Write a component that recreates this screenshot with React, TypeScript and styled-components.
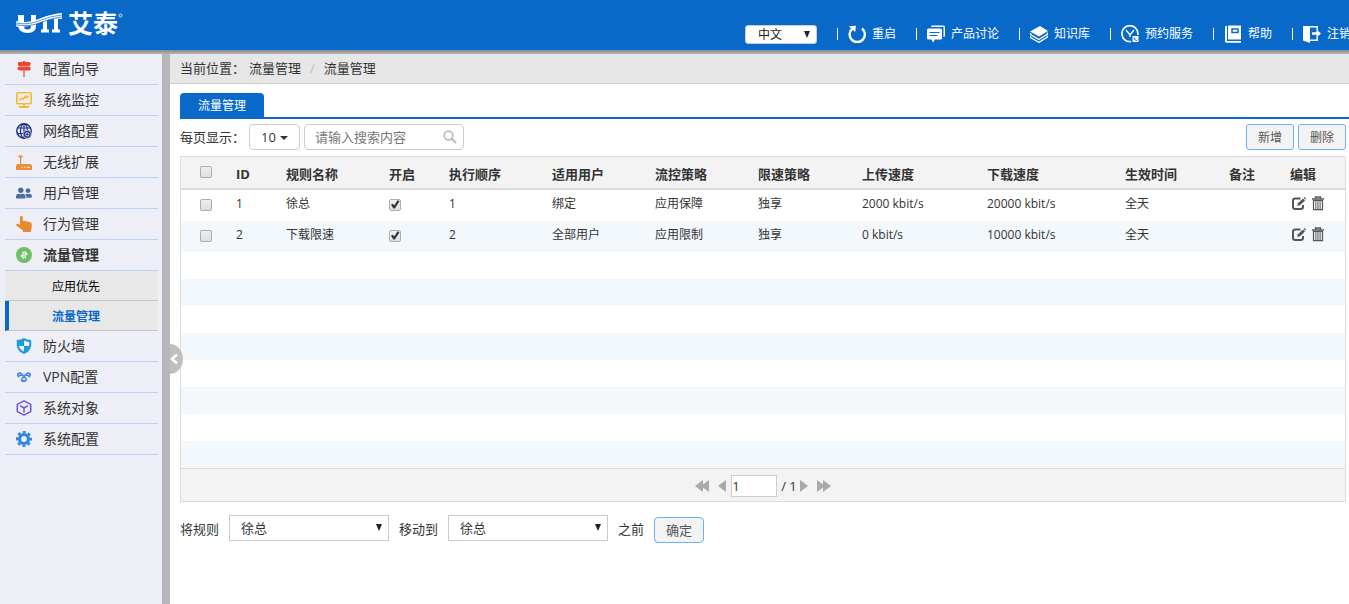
import React from "react";
import styled, { createGlobalStyle, css } from "styled-components";
import { FaUserFriends } from "react-icons/fa";

const GlobalStyle = createGlobalStyle`
  * { box-sizing: border-box; }
  body {
    margin: 0;
    background: #fff;
    color: #333;
    font-family: "Open Sans", "Noto Sans CJK SC", sans-serif;
    font-size: 13px;
    line-height: 20px;
  }
  button, input, select { font-family: inherit; }
  a { text-decoration: none; }
`;

const Page = styled.div`
  min-height: 100vh;
  display: flex;
  flex-direction: column;
  overflow: hidden;
`;

/* ---------- header ---------- */

const Header = styled.header`
  display: flex;
  align-items: flex-start;
  height: 50px;
  padding-left: 15px;
  background: #0869c9;
  overflow: hidden;
`;

const HeaderShade = styled.div`
  height: 4px;
  background: linear-gradient(#88898e, #b2b4ba);
`;

const Brand = styled.a`
  display: flex;
  align-items: flex-start;
  gap: 5px;
  margin-top: 11px;
  color: #fff;
  font-size: 25px;
  line-height: 24px;
  font-weight: 700;
`;

const BrandMark = styled.svg`
  width: 48px;
  height: 24px;
`;

const Registered = styled.svg`
  width: 5px;
  height: 5px;
  margin: 2px 0 0 -5px;
`;

const HeaderTools = styled.nav`
  display: flex;
  align-items: center;
  margin: 24px -2px 0 auto;
  flex: none;
`;

const SelectBox = styled.span`
  position: relative;
  display: inline-flex;
`;

const SelectArrow = styled.svg<{ $right: number; $top: number }>`
  position: absolute;
  right: ${(p) => p.$right}px;
  top: ${(p) => p.$top}px;
  width: 6px;
  height: 7px;
  fill: #222;
  pointer-events: none;
`;

const LangSelect = styled.select`
  appearance: none;
  width: 72px;
  height: 19px;
  padding: 0 0 0 12px;
  border: 1px solid #ccc;
  border-radius: 3px;
  background: #fff;
  color: #222;
  font-size: 12px;
  line-height: 17px;
`;

const ToolList = styled.div`
  display: flex;
  gap: 20px;
  margin-left: 20px;
`;

const Tool = styled.a`
  display: flex;
  align-items: center;
  gap: 6px;
  color: #fff;
  font-size: 12px;
  line-height: 20px;
  white-space: nowrap;

  &::before {
    content: "";
    width: 1px;
    height: 12px;
    margin-right: 4px;
    background: #fff;
  }

  svg {
    width: 18px;
    height: 18px;
  }
`;

/* ---------- sidebar ---------- */

const Body = styled.div`
  flex: 1;
  display: flex;
`;

const Sidebar = styled.aside`
  position: relative;
  flex: none;
  width: 170px;
  padding: 0 4px 0 5px;
  border-right: 8px solid #b5b7bd;
  background: #eeeff6;
`;

const MenuItem = styled.a<{ $active?: boolean }>`
  display: flex;
  align-items: center;
  gap: 11px;
  height: 31px;
  padding-left: 11px;
  border-bottom: 1px solid #bbd2f4;
  color: #333;
  font-size: 14px;
  font-weight: ${(p) => (p.$active ? 700 : 400)};

  svg {
    flex: none;
    width: 16px;
    height: 16px;
  }
`;

const SubItem = styled.a<{ $active?: boolean }>`
  display: flex;
  align-items: center;
  height: 30px;
  padding: 2px 0 0 47px;
  border-bottom: 1px solid #c6c6c8;
  background: #e8e8e8;
  color: #000;
  font-size: 12px;
  ${(p) =>
    p.$active &&
    css`
      padding-left: 43px;
      border-left: 4px solid #0869c9;
      color: #0869c9;
      font-weight: 700;
    `}
`;

const Collapse = styled.button`
  position: absolute;
  left: 170px;
  top: 290px;
  width: 13px;
  height: 30px;
  padding: 0;
  border: 0;
  border-radius: 0 13px 13px 0 / 0 15px 15px 0;
  background: #bfbfbf;
  cursor: pointer;

  svg {
    display: block;
    width: 9px;
    height: 12px;
  }
`;

/* ---------- content ---------- */

const Main = styled.main`
  flex: 1;
  min-width: 0;
`;

const Breadcrumb = styled.div`
  display: flex;
  align-items: center;
  height: 30px;
  padding: 0 0 2px 10px;
  border-bottom: 1px solid #ccc;
  background: #e7e7e7;
`;

const CrumbLabel = styled.span`
  margin-right: 4px;
`;

const Crumb = styled.a`
  color: #333;
`;

const CrumbSlash = styled.span`
  padding: 0 9px;
  color: #bbb;
`;

const Tabs = styled.div`
  display: flex;
  margin: 9px 0 0 10px;
  border-bottom: 2px solid #0869c9;
`;

const Tab = styled.button`
  height: 24px;
  padding: 0 18px;
  border: 0;
  border-radius: 4px 4px 0 0;
  background: #0869c9;
  color: #fff;
  font-size: 12px;
`;

const Panel = styled.section`
  padding: 5px 3px 0 10px;
`;

const Toolbar = styled.div`
  display: flex;
  align-items: center;
  gap: 4px;
  height: 26px;
`;

const SizeButton = styled.button`
  display: flex;
  align-items: center;
  justify-content: center;
  gap: 4px;
  width: 51px;
  height: 26px;
  padding: 0;
  border: 1px solid #ccc;
  border-radius: 4px;
  background: #fff;
  color: #333;
  font-size: 13px;
`;

const Caret = styled.i`
  margin-top: 2px;
  border: 4px solid transparent;
  border-top-color: #333;
  border-bottom: 0;
`;

const SearchBox = styled.label`
  display: flex;
  align-items: center;
  width: 160px;
  height: 26px;
  padding: 0 6px 0 10px;
  border: 1px solid #ccc;
  border-radius: 4px;

  svg {
    flex: none;
    width: 14px;
    height: 14px;
  }
`;

const SearchInput = styled.input`
  flex: 1;
  min-width: 0;
  height: 20px;
  padding: 0;
  border: 0;
  outline: 0;
  background: none;
  font-size: 13px;

  &::placeholder { color: #777; }
`;

const Actions = styled.div`
  display: flex;
  gap: 4px;
  margin-left: auto;
`;

const ActionButton = styled.button<{ $large?: boolean }>`
  width: ${(p) => (p.$large ? 50 : 48)}px;
  height: 26px;
  padding: 0;
  border: 1px solid #6db1f8;
  border-radius: ${(p) => (p.$large ? 4 : 3)}px;
  background: #f3f3f3;
  color: #555;
  font-size: ${(p) => (p.$large ? 13 : 12)}px;
`;

const TableFrame = styled.div`
  margin-top: 6px;
  border: 1px solid #dcdcdc;
`;

const RuleTable = styled.table`
  width: 100%;
  table-layout: fixed;
  border-collapse: separate;
  border-spacing: 0;
`;

const Th = styled.th`
  height: 33px;
  padding: 2px 0 0 8px;
  border-bottom: 2px solid #dcdcdc;
  background: #f3f3f3;
  font-size: 13px;
  font-weight: 700;
  text-align: left;
  white-space: nowrap;
`;

const CheckTh = styled(Th)`
  padding: 0 0 2px 8px;
`;

const Row = styled.tr`
  &:nth-child(even) { background: #f3f8fc; }
`;

const Td = styled.td`
  height: 31px;
  padding: 0 0 3px 8px;
  font-size: 12px;
  white-space: nowrap;
`;

const IconTd = styled(Td)`
  padding-bottom: 5px;
`;

const EmptyTd = styled.td`
  height: 27px;
  padding: 0;
`;

const CheckCell = styled.div`
  display: flex;
  padding-left: 11px;
`;

const RowCheck = styled.div<{ $inset?: boolean }>`
  display: flex;
  padding: 1px 0 0 ${(p) => (p.$inset ? 11 : 0)}px;
`;

const Checkbox = styled.input.attrs({ type: "checkbox" })`
  appearance: none;
  display: block;
  width: 12px;
  height: 12px;
  margin: 0;
  border: 1px solid #adadad;
  border-radius: 2px;
  background: linear-gradient(#efefef, #dedede);

  &:checked::before {
    content: "";
    display: block;
    width: 10px;
    height: 10px;
    background: #333;
    clip-path: polygon(10% 50%, 28% 42%, 42% 60%, 76% 8%, 95% 18%, 48% 90%, 34% 90%);
  }
`;

const RowTools = styled.div`
  display: flex;
  gap: 5px;
  padding-left: 2px;
`;

const IconButton = styled.button`
  display: block;
  padding: 0;
  border: 0;
  background: none;
  line-height: 0;
  cursor: pointer;

  svg {
    width: 14px;
    height: 15px;
  }
`;

const Pager = styled.div`
  display: flex;
  align-items: center;
  justify-content: center;
  height: 33px;
  padding-top: 2px;
  border-top: 1px solid #dcdcdc;
  background: #f3f3f3;
`;

const PagerButton = styled.button<{ $wide?: boolean }>`
  width: ${(p) => (p.$wide ? 14 : 10)}px;
  height: 12px;
  padding: 0;
  border: 0;
  background: none;

  svg {
    display: block;
    width: 100%;
    height: 12px;
    fill: #aaa;
  }
`;

const PagerGroup = styled.div`
  display: flex;
  align-items: center;
  gap: 8px;
`;

const PageInput = styled.input`
  width: 46px;
  height: 22px;
  margin: 0 4px;
  padding: 1px 0;
  border: 1px solid #ccc;
  background: #fff;
  color: #333;
  font-size: 13px;
`;

const PageTotal = styled.span`
  padding-right: 2px;
  font-size: 13px;
`;

const MoveForm = styled.form`
  display: flex;
  align-items: flex-start;
  gap: 10px;
  margin-top: 13px;
  line-height: 28px;

  ${ActionButton} {
    margin-top: 2px;
    padding-bottom: 2px;
  }
`;

const RuleSelect = styled.select`
  appearance: none;
  width: 160px;
  height: 26px;
  padding: 0 11px;
  border: 1px solid #ccc;
  border-radius: 0;
  background: #fff;
  color: #333;
  font-size: 13px;
`;

/* ---------- icons ---------- */

const LogoIcon = () => (
  <BrandMark viewBox="0 0 48 24" aria-hidden="true">
    <g fill="#fff">
      <path d="M3 4h6v11q0 3.500 3.500 3.500T16 15V4h5v11q0 7-8.500 7T3 15z" />
      <path d="M28 9h4v9.500h2v3h-8v-3h2zM39 8h4v10.500h2v3h-8v-3h2z" />
      <path d="M1 10Q12 13 25 7.500 35 3 47 2v6q-12-1-22 3.500-13 5.500-24 4z" />
    </g>
    <g fill="none" stroke="#0869c9" strokeWidth="0.7">
      <path d="M1 12q12 2.500 24-2.500Q35 5 47 4M1 13.800q13 2.500 25-2.300Q36 7 47 6" />
    </g>
  </BrandMark>
);

const RestartIcon = () => (
  <svg viewBox="0 0 18 18" fill="none" stroke="#fff" strokeWidth="2.400">
    <path d="M14 3.500A7.600 7.600 0 1 1 4.500 3.500" />
    <path d="M.8 1.200 8 .8 7.200 7z" fill="#fff" stroke="none" />
  </svg>
);

const ForumIcon = () => (
  <svg viewBox="0 0 18 18">
    <path d="M4 2q0-1.500 1.500-1.500h11Q18 .5 18 2v8.500q0 1.500-1.500 1.500V2z" fill="#fff" />
    <path d="M1.500 3.500h12Q15 3.500 15 5v8q0 1.500-1.500 1.500H8L6 17.500l-1.500-3h-3Q0 14.500 0 13V5q0-1.500 1.500-1.500z" fill="#fff" />
    <path d="M2.500 7.500h10M2.500 10.500h8" stroke="#0869c9" strokeWidth="1.200" />
  </svg>
);

const BooksIcon = () => (
  <svg viewBox="0 0 18 18">
    <path d="M10 1 18 6 9 11.500 0 6.500z" fill="#fff" />
    <path d="M.5 8v1.500L9 14.500 17.500 9V7.500M.5 11v1.500l8.500 4.800 8.500-5.300v-1.500" fill="none" stroke="#fff" strokeWidth="1.300" />
  </svg>
);

const BookingIcon = () => (
  <svg viewBox="0 0 18 18" fill="none" stroke="#fff">
    <path d="M10 16.600A8 8 0 1 1 16.800 10" strokeWidth="1.700" />
    <path d="M5 5l4 5 4-5M9 10v2" strokeWidth="1.300" />
    <path d="M11.500 11h6v6h-6z" fill="#fff" stroke="none" />
    <path d="M13 12.500q0 3 3 3" stroke="#0869c9" />
  </svg>
);

const HelpIcon = () => (
  <svg viewBox="0 0 18 18">
    <path d="M1 1h2v15h14v1.800H2.500Q1 17.800 1 16.500zM4 .5h13v14H4z" fill="#fff" />
    <path d="M8 4h6v3.500H8z" fill="none" stroke="#0869c9" strokeWidth="1.500" />
  </svg>
);

const LogoutIcon = () => (
  <svg viewBox="0 0 18 18">
    <path d="M0 1h15v4h-1.500V2.500H7v12h6.500V12H15v4H7v2L0 15.500z" fill="#fff" />
    <path d="M9 7.300h4.500V4.500L18 8.500l-4.500 4V9.700H9z" fill="#fff" />
  </svg>
);

const SignpostIcon = () => (
  <svg viewBox="0 0 16 16" fill="#e6492d">
    <path d="M7 0h2v1h4.500L15 2.800 13.500 5H3Q2 5 2 4V2q0-1 1-1h4zM3 5.500h10.500q1 0 1 1v2q0 1-1 1H3L1 7.500z" />
    <path d="M7 9.500h2V16H7z" opacity=".6" />
  </svg>
);

const MonitorIcon = () => (
  <svg viewBox="0 0 16 16" fill="none" stroke="#f2bd2c">
    <rect x=".8" y=".8" width="14.400" height="11" rx="1" strokeWidth="1.600" />
    <path d="M3 8.500l2.500-2 1.500 1 2.500-3.500 1 2 2.500-2.500" strokeWidth="1.500" />
    <path d="M8 12v2.500M3 15h10" strokeWidth="1.800" />
  </svg>
);

const GlobeIcon = () => (
  <svg viewBox="0 0 16 16" fill="none" stroke="#1f2f86">
    <circle cx="8" cy="8" r="7.200" strokeWidth="1.500" />
    <ellipse cx="8" cy="8" rx="3.500" ry="7.200" strokeWidth="1.200" />
    <path d="M1 5h14M1 10.500h14M8 1v14" strokeWidth="1.200" />
    <circle cx="11.300" cy="11.300" r="4" fill="#1f2f86" stroke="#eeeff6" strokeWidth=".6" />
    <circle cx="11.300" cy="11.300" r="1.700" stroke="#eeeff6" />
  </svg>
);

const RouterIcon = () => (
  <svg viewBox="0 0 16 16">
    <path d="M1.500 2.500Q4.500-.8 7.500 2.500L4.500 5z" fill="#e98e33" opacity=".7" />
    <path d="M4 3h1.200v7H4z" fill="#e98e33" />
    <path d="M1.500 10h13l1.500 1.500V15q0 1-1 1H1q-1 0-1-1v-3.500z" fill="#e98e33" />
    <path d="M5.500 13.200h1.200M8.200 13.200h1.200M11 13.200h3" stroke="#fff" />
  </svg>
);

const HandIcon = () => (
  <svg viewBox="0 0 16 16" fill="#e58a2e">
    <path d="M4 1.300Q4 0 5.400 0t1.400 1.300V5q1.500-.4 2.300.3 1.300-.5 2.200.4 1.400-.4 2.200.5Q15.700 6 15.700 8v3q0 1.500-.7 2.500V16H7v-1.500L.6 9.700Q-.2 8.800.7 8q.9-.6 2 0L4 8.700z" />
  </svg>
);

const FlowIcon = () => (
  <svg viewBox="0 0 16 16">
    <circle cx="8" cy="8" r="8" fill="#6dc067" />
    <path d="M7 4.500v6.300L4.800 8.300M9.200 11.500V5.200l2.200 2.500" fill="none" stroke="#fff" strokeWidth="1.300" />
  </svg>
);

const ShieldIcon = () => (
  <svg viewBox="0 0 16 16">
    <path d="M8 0q3 2 7.200 2v5.500Q14.500 13.500 8 16 1.500 13.500.8 7.500V2Q5 2 8 0z" fill="#1b9ade" />
    <path d="M8 2.500q2.500 1.300 5.200 1.500V8H8zM2.800 8H8v5.500Q3.800 11.800 2.800 8z" fill="#eeeff6" />
  </svg>
);

const VpnIcon = () => (
  <svg viewBox="0 0 16 16" fill="none" stroke="#3b82e0" strokeWidth="1.500" strokeLinecap="round" strokeLinejoin="round">
    <path d="M3 7.800A2 2 0 1 1 5.200 4.600L9.800 9.500a1.600 1.600 0 1 1-2.600 1.800" />
    <path d="M3.500 6.200h1.800M12.500 6.200h-1.800" />
    <path d="M13 7.800a2 2 0 1 0-2.200-3.200L6 9.500a1.500 1.500 0 1 0 2 2.300" />
  </svg>
);

const CubeIcon = () => (
  <svg viewBox="0 0 16 16" fill="none" stroke="#6f55d0" strokeWidth="1.500" strokeLinejoin="round">
    <path d="M8 .8 14.700 4.300v7.400L8 15.200 1.300 11.700V4.300z" />
    <path d="M4 5.700 8 8l4-2.300M8 8v4.800" />
  </svg>
);

const GearIcon = () => (
  <svg viewBox="0 0 16 16" fill="none" stroke="#2f86dc">
    <circle cx="8" cy="8" r="4.500" strokeWidth="3.200" />
    <circle cx="8" cy="8" r="6.900" strokeWidth="2.200" strokeDasharray="3.100 2.319" strokeDashoffset="1.550" />
  </svg>
);

const SearchIcon = () => (
  <svg viewBox="0 0 14 14" fill="none" stroke="#bbb">
    <circle cx="5.500" cy="5.500" r="4.300" strokeWidth="1.800" />
    <path d="M8.800 8.800 13 13" strokeWidth="2.200" />
  </svg>
);

const EditIcon = () => (
  <svg viewBox="0 0 14 15" fill="none" stroke="#555">
    <path d="M8.500 2.500H3.300Q1 2.500 1 4.800v6Q1 13 3.300 13h5.400Q11 13 11 10.800V9" strokeWidth="2" />
    <path d="M5.300 10l.6-2.700L11 2.500l2 2L8 9.300z" fill="#555" stroke="none" />
    <path d="M11.600 1.800l.8-.8 1.600 1.600-.6 1.200z" fill="#555" stroke="none" />
  </svg>
);

const TrashIcon = () => (
  <svg viewBox="0 0 14 15" fill="none" stroke="#555">
    <path d="M1 3h12M4.500 3V1h5v2" strokeWidth="1.300" />
    <path d="M2.500 4.500v9.200h9V4.500z" strokeWidth="1.200" />
    <path d="M4.900 5v8M7 5v8M9.100 5v8" />
  </svg>
);

const ArrowShape = () => (
  <path d="M0 0h6L3 7z" />
);

/* ---------- data ---------- */

const tools = [
  { label: "重启", icon: <RestartIcon /> },
  { label: "产品讨论", icon: <ForumIcon /> },
  { label: "知识库", icon: <BooksIcon /> },
  { label: "预约服务", icon: <BookingIcon /> },
  { label: "帮助", icon: <HelpIcon /> },
  { label: "注销", icon: <LogoutIcon /> },
];

const menu = [
  { label: "配置向导", icon: <SignpostIcon /> },
  { label: "系统监控", icon: <MonitorIcon /> },
  { label: "网络配置", icon: <GlobeIcon /> },
  { label: "无线扩展", icon: <RouterIcon /> },
  { label: "用户管理", icon: <FaUserFriends color="#4a6f9c" /> },
  { label: "行为管理", icon: <HandIcon /> },
  { label: "流量管理", icon: <FlowIcon />, children: ["应用优先", "流量管理"] },
  { label: "防火墙", icon: <ShieldIcon /> },
  { label: "VPN配置", icon: <VpnIcon /> },
  { label: "系统对象", icon: <CubeIcon /> },
  { label: "系统配置", icon: <GearIcon /> },
];

const columnWidths = [47, 50, 103, 60, 103, 103, 103, 104, 125, 138, 104, 61, 63];

const headings = [
  "ID", "规则名称", "开启", "执行顺序", "适用用户", "流控策略",
  "限速策略", "上传速度", "下载速度", "生效时间", "备注", "编辑",
];

const rules = [
  { id: 1, name: "徐总", cells: ["1", "绑定", "应用保障", "独享", "2000 kbit/s", "20000 kbit/s", "全天", ""] },
  { id: 2, name: "下载限速", cells: ["2", "全部用户", "应用限制", "独享", "0 kbit/s", "10000 kbit/s", "全天", ""] },
];

const emptyRows = Array.from({ length: 8 }, (_, i) => i);

const RuleChooser = ({ id }: { id: string }) => (
  <SelectBox>
    <RuleSelect id={id} defaultValue="徐总">
      {rules.map((r) => (
        <option key={r.id}>{r.name}</option>
      ))}
    </RuleSelect>
    <SelectArrow $right={7} $top={9} viewBox="0 0 6 7">
      <ArrowShape />
    </SelectArrow>
  </SelectBox>
);

export default function App() {
  return (
    <Page>
      <GlobalStyle />
      <Header>
        <Brand href="#">
          <LogoIcon />
          艾泰
          <Registered viewBox="0 0 5 5">
            <circle cx="2.500" cy="2.500" r="1.500" fill="none" stroke="#fff" strokeWidth=".8" />
          </Registered>
        </Brand>
        <HeaderTools>
          <SelectBox>
            <LangSelect aria-label="语言" defaultValue="中文">
              <option>中文</option>
              <option>English</option>
            </LangSelect>
            <SelectArrow $right={7} $top={6} viewBox="0 0 6 7">
              <ArrowShape />
            </SelectArrow>
          </SelectBox>
          <ToolList>
            {tools.map((t) => (
              <Tool key={t.label} href="#">
                {t.icon}
                {t.label}
              </Tool>
            ))}
          </ToolList>
        </HeaderTools>
      </Header>
      <HeaderShade />
      <Body>
        <Sidebar>
          {menu.map((m) => (
            <React.Fragment key={m.label}>
              <MenuItem href="#" $active={!!m.children}>
                {m.icon}
                {m.label}
              </MenuItem>
              {m.children?.map((c, i) => (
                <SubItem key={c} href="#" $active={i === 1}>
                  {c}
                </SubItem>
              ))}
            </React.Fragment>
          ))}
          <Collapse aria-label="收起菜单">
            <svg viewBox="0 0 9 12">
              <path d="M7 1.500 2 6l5 4.500" fill="none" stroke="#fff" strokeWidth="2.600" />
            </svg>
          </Collapse>
        </Sidebar>
        <Main>
          <Breadcrumb>
            <CrumbLabel>当前位置：</CrumbLabel>
            <Crumb href="#">流量管理</Crumb>
            <CrumbSlash>/</CrumbSlash>
            <Crumb href="#">流量管理</Crumb>
          </Breadcrumb>
          <Tabs>
            <Tab>流量管理</Tab>
          </Tabs>
          <Panel>
            <Toolbar>
              <span>每页显示：</span>
              <SizeButton>
                10
                <Caret />
              </SizeButton>
              <SearchBox>
                <SearchInput type="text" aria-label="搜索" placeholder="请输入搜索内容" />
                <SearchIcon />
              </SearchBox>
              <Actions>
                <ActionButton>新增</ActionButton>
                <ActionButton>删除</ActionButton>
              </Actions>
            </Toolbar>
            <TableFrame>
              <RuleTable>
                <colgroup>
                  {columnWidths.map((w, i) => (
                    <col key={i} width={w} />
                  ))}
                </colgroup>
                <thead>
                  <tr>
                    <CheckTh>
                      <CheckCell>
                        <Checkbox aria-label="全选" />
                      </CheckCell>
                    </CheckTh>
                    {headings.map((h) => (
                      <Th key={h}>{h}</Th>
                    ))}
                  </tr>
                </thead>
                <tbody>
                  {rules.map((r) => (
                    <Row key={r.id}>
                      <Td>
                        <RowCheck $inset>
                          <Checkbox aria-label={`选择 ${r.name}`} />
                        </RowCheck>
                      </Td>
                      <Td>{r.id}</Td>
                      <Td>{r.name}</Td>
                      <Td>
                        <RowCheck>
                          <Checkbox aria-label={`开启 ${r.name}`} defaultChecked />
                        </RowCheck>
                      </Td>
                      {r.cells.map((c, i) => (
                        <Td key={i}>{c}</Td>
                      ))}
                      <IconTd>
                        <RowTools>
                          <IconButton aria-label="编辑">
                            <EditIcon />
                          </IconButton>
                          <IconButton aria-label="删除">
                            <TrashIcon />
                          </IconButton>
                        </RowTools>
                      </IconTd>
                    </Row>
                  ))}
                  {emptyRows.map((i) => (
                    <Row key={`empty-${i}`}>
                      <EmptyTd colSpan={13} />
                    </Row>
                  ))}
                </tbody>
              </RuleTable>
              <Pager>
                <PagerGroup>
                  <PagerButton $wide aria-label="首页">
                    <svg viewBox="0 0 14 12"><path d="M0 6l8-6v12zM6 6l8-6v12z" /></svg>
                  </PagerButton>
                  <PagerButton aria-label="上一页">
                    <svg viewBox="0 0 10 12"><path d="M1 6l8-6v12z" /></svg>
                  </PagerButton>
                </PagerGroup>
                <PageInput type="text" aria-label="页码" defaultValue="1" />
                <PageTotal>/ 1</PageTotal>
                <PagerGroup>
                  <PagerButton aria-label="下一页">
                    <svg viewBox="0 0 10 12"><path d="M9 6 1 0v12z" /></svg>
                  </PagerButton>
                  <PagerButton $wide aria-label="末页">
                    <svg viewBox="0 0 14 12"><path d="M14 6 6 0v12zM8 6 0 0v12z" /></svg>
                  </PagerButton>
                </PagerGroup>
              </Pager>
            </TableFrame>
            <MoveForm onSubmit={(e) => e.preventDefault()}>
              <label htmlFor="rule-from">将规则</label>
              <RuleChooser id="rule-from" />
              <label htmlFor="rule-to">移动到</label>
              <RuleChooser id="rule-to" />
              <span>之前</span>
              <ActionButton $large>确定</ActionButton>
            </MoveForm>
          </Panel>
        </Main>
      </Body>
    </Page>
  );
}
